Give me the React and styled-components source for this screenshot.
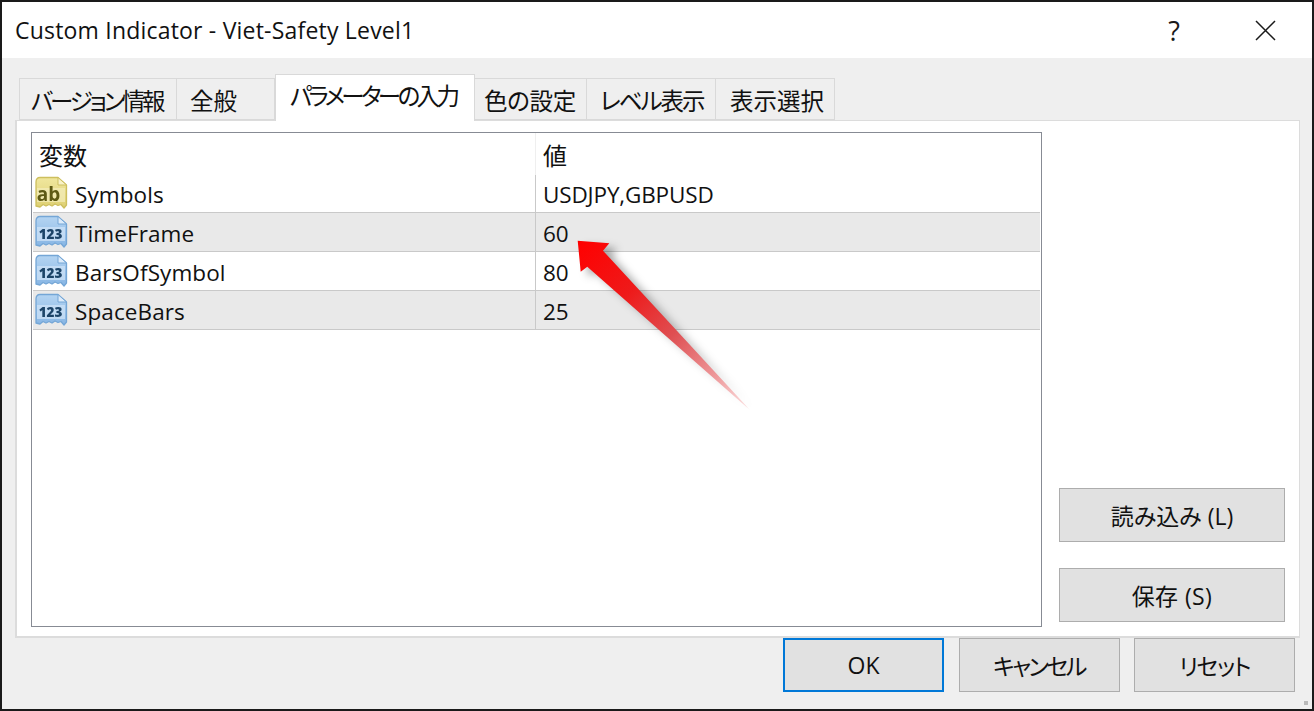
import React from "react";
import styled, { createGlobalStyle } from "styled-components";

const Global = createGlobalStyle`
  html, body { margin: 0; padding: 0; background: #1a1a1a; }
  * { box-sizing: border-box; }
`;

const FONT = `"Open Sans", "Noto Sans CJK JP", sans-serif`;

const Window = styled.div`
  position: relative;
  width: 1314px;
  height: 711px;
  border: 2px solid #1a1a1a;
  background: #efefef;
  display: flex;
  flex-direction: column;
  overflow: hidden;
  font-family: ${FONT};
  font-feature-settings: "palt";
  color: #111;
`;

const TitleBar = styled.header`
  height: 56px;
  flex: none;
  background: #fff;
  display: flex;
  align-items: center;
  padding: 0 36px 0 13px;
`;

const Title = styled.div`
  flex: 1;
  font-size: 23px;
  letter-spacing: 0.2px;
  white-space: nowrap;
`;

const Help = styled.span`
  font-size: 27px;
  line-height: 1;
  margin-right: 75px;
  color: #1a1a1a;
`;

const CloseIcon = styled.svg`
  display: block;
  width: 21px;
  height: 21px;
`;

const Body = styled.main`
  flex: 1;
  display: flex;
  flex-direction: column;
  padding: 16px 12px 17px 13px;
  min-height: 0;
`;

const TabBar = styled.nav`
  display: flex;
  align-items: flex-end;
  height: 46px;
  flex: none;
  padding-left: 4px;
`;

const Tab = styled.div`
  width: ${(p) => p.$w}px;
  height: ${(p) => (p.$active ? 47 : 42)}px;
  margin-bottom: ${(p) => (p.$active ? -1 : 0)}px;
  position: relative;
  z-index: ${(p) => (p.$active ? 2 : 0)};
  background: ${(p) => (p.$active ? "#fff" : "#efefef")};
  border: 1px solid #d9d9d9;
  border-width: 1px 1px ${(p) => (p.$active ? 0 : 1)}px ${(p) => (p.$first || p.$active ? 1 : 0)}px;
  padding-left: ${(p) => p.$pad}px;
  font-size: 23.5px;
  line-height: ${(p) => (p.$active ? 43 : 44)}px;
  letter-spacing: ${(p) => p.$track ?? 0}px;
  white-space: nowrap;
`;

const Panel = styled.section`
  height: 518px;
  flex: none;
  position: relative;
  z-index: 1;
  background: #fff;
  border: 2px solid #dcdcdc;
  border-width: 1px 1px 2px 2px;
  padding: 11px 14px 10px 14px;
  display: flex;
`;

const Grid = styled.div`
  width: 1011px;
  height: 495px;
  flex: none;
  border: 1.5px solid #878b94;
  padding: 0 1px;
`;

const HeaderRow = styled.div`
  display: grid;
  grid-template-columns: 502px 505px;
  height: 42px;
`;

const HeaderCell = styled.div`
  font-size: 24px;
  line-height: 45px;
  padding-left: ${(p) => p.$pad}px;
  border-left: ${(p) => (p.$divided ? "1px solid #efefef" : "0")};
`;

const Row = styled.div`
  display: grid;
  grid-template-columns: 502px 505px;
  height: ${(p) => p.$h}px;
  background: ${(p) => (p.$shade ? "#e9e9e9" : "#fff")};
  border-bottom: 1.5px solid #c9c9c9;
  font-size: 22.5px;
`;

const NameCell = styled.div`
  display: flex;
  align-items: center;
  gap: 7px;
  padding-left: 1px;
  min-width: 0;
`;

const NameText = styled.span`
  padding-top: 3px;
  letter-spacing: 0.1px;
`;

const ValueCell = styled.div`
  display: flex;
  align-items: center;
  padding: 3px 0 0 7px;
  letter-spacing: -0.15px;
  border-left: 1.5px solid #c9c9c9;
`;

const RowIcon = styled.svg`
  display: block;
  width: 34px;
  height: 34px;
  flex: none;
  filter: blur(0.35px);
`;

const Side = styled.aside`
  flex: 1;
  display: flex;
  flex-direction: column;
  justify-content: flex-end;
  align-items: flex-start;
  gap: 26px;
  padding: 0 0 4px 17px;
`;

const Button = styled.button`
  width: ${(p) => p.$w}px;
  height: 54px;
  background: #e1e1e1;
  border: ${(p) => (p.$primary ? "2px solid #0078d7" : "1.5px solid #adadad")};
  font-family: ${FONT};
  font-feature-settings: "palt";
  font-size: 23px;
  letter-spacing: ${(p) => p.$track ?? 0}px;
  color: #111;
  padding: 0;
`;

const Footer = styled.footer`
  display: flex;
  justify-content: flex-end;
  gap: 14.5px;
  margin-right: 5px;
`;

const Grip = styled.span`
  position: absolute;
  right: 4px;
  bottom: 4px;
  width: 4px;
  height: 4px;
  background: #b9b9b9;
`;

const ArrowLayer = styled.svg`
  position: absolute;
  left: -2px;
  top: -2px;
  width: 1314px;
  height: 711px;
  pointer-events: none;
  z-index: 5;
`;

const PageIcon = ({ kind }) => {
  const blue = kind === "num";
  const id = blue ? "pgB" : "pgY";
  const stroke = blue ? "#74a6d6" : "#cdbf5e";
  const top = blue ? "#b4d4f2" : "#f0e79e";
  const bot = blue ? "#86b5e4" : "#ddcf72";
  const ink = blue ? "#1c4468" : "#5e5a14";
  return (
    <RowIcon viewBox="0 0 34 34" aria-hidden="true">
      <defs>
        <linearGradient id={id} x1="0" y1="0" x2="0" y2="1">
          <stop offset="0" stopColor={top} />
          <stop offset="1" stopColor={bot} />
        </linearGradient>
      </defs>
      <path
        d="M6 1.500H24L32.500 9V29L30 32L27 28.500L24 29.500L21 28L18 30L15 28.500L12 30L9 28.500L6 31L2 30V6Q2 1.500 6 1.500Z"
        fill={`url(#${id})`}
        stroke={stroke}
        strokeWidth="1.3"
        strokeLinejoin="round"
      />
      <path d="M24 1.500V9H32.500Z" fill={blue ? "#dcebfa" : "#f8f2c8"} stroke={stroke} strokeWidth="1" />
      <rect x="3" y="12" width="28" height="14" fill={blue ? "#cfe3f7" : "#f3ecb8"} opacity="0.75" />
      {blue ? (
        <text x="16.500" y="24" textAnchor="middle" fontFamily="'Open Sans', sans-serif" fontWeight="800" fontSize="13.500" fill={ink}>123</text>
      ) : (
        <text x="14.500" y="24.500" textAnchor="middle" fontFamily="'Open Sans', sans-serif" fontWeight="700" fontSize="19" fill={ink}>ab</text>
      )}
    </RowIcon>
  );
};

const tabs = [
  { label: "バージョン情報", w: 158, pad: 11, first: true, track: -3.1 },
  { label: "全般", w: 98, pad: 13 },
  { label: "パラメーターの入力", w: 200, pad: 14, active: true, track: -3.6 },
  { label: "色の設定", w: 112, pad: 9, track: -0.3 },
  { label: "レベル表示", w: 129, pad: 13, track: -2 },
  { label: "表示選択", w: 119, pad: 14 },
];

const rows = [
  { name: "Symbols", value: "USDJPY,GBPUSD", kind: "text", h: 37.5 },
  { name: "TimeFrame", value: "60", kind: "num", shade: true, h: 39 },
  { name: "BarsOfSymbol", value: "80", kind: "num", h: 39 },
  { name: "SpaceBars", value: "25", kind: "num", shade: true, h: 39 },
];

export default function App() {
  return (
    <Window>
      <Global />
      <TitleBar>
        <Title>Custom Indicator - Viet-Safety Level1</Title>
        <Help>?</Help>
        <CloseIcon viewBox="0 0 21 21" aria-hidden="true">
          <path d="M1 1L20 20M20 1L1 20" stroke="#1a1a1a" strokeWidth="1.5" fill="none" />
        </CloseIcon>
      </TitleBar>
      <Body>
        <TabBar>
          {tabs.map((t) => (
            <Tab key={t.label} $w={t.w} $pad={t.pad} $active={t.active} $first={t.first} $track={t.track}>
              {t.label}
            </Tab>
          ))}
        </TabBar>
        <Panel>
          <Grid>
            <HeaderRow>
              <HeaderCell $pad={6}>変数</HeaderCell>
              <HeaderCell $pad={7} $divided>値</HeaderCell>
            </HeaderRow>
            {rows.map((r) => (
              <Row key={r.name} $shade={r.shade} $h={r.h}>
                <NameCell>
                  <PageIcon kind={r.kind} />
                  <NameText>{r.name}</NameText>
                </NameCell>
                <ValueCell>{r.value}</ValueCell>
              </Row>
            ))}
          </Grid>
          <Side>
            <Button $w={226}>読み込み (L)</Button>
            <Button $w={226} $track={0.4}>保存 (S)</Button>
          </Side>
        </Panel>
        <Footer>
          <Button $w={161} $primary>OK</Button>
          <Button $w={161} $track={-2.5}>キャンセル</Button>
          <Button $w={161} $track={-1.5}>リセット</Button>
        </Footer>
      </Body>
      <Grip />
      <ArrowLayer viewBox="0 0 1314 711" aria-hidden="true">
        <defs>
          <linearGradient id="arrowFill" gradientUnits="userSpaceOnUse" x1="578" y1="241" x2="751" y2="411">
            <stop offset="0" stopColor="#ff0000" />
            <stop offset="0.3" stopColor="#ee1a1a" />
            <stop offset="0.55" stopColor="#df4f52" />
            <stop offset="0.8" stopColor="#ee9a9c" />
            <stop offset="0.97" stopColor="#fbdcdc" />
            <stop offset="1" stopColor="#ffffff" stopOpacity="0.4" />
          </linearGradient>
          <linearGradient id="arrowShade" gradientUnits="userSpaceOnUse" x1="578" y1="241" x2="751" y2="411">
            <stop offset="0" stopColor="#000" stopOpacity="0.4" />
            <stop offset="0.7" stopColor="#000" stopOpacity="0.2" />
            <stop offset="1" stopColor="#000" stopOpacity="0" />
          </linearGradient>
          <filter id="arrowBlur" x="-20%" y="-20%" width="140%" height="140%">
            <feGaussianBlur stdDeviation="4" />
          </filter>
        </defs>
        <path d="M586 246L617 248.500L611 256L759 416L595 271.500L588.500 277Z" fill="url(#arrowShade)" filter="url(#arrowBlur)" />
        <path d="M577.700 240.700L609.300 243.300L603 250.700L750.700 410.700L587.300 266.700L580.700 271.700Z" fill="url(#arrowFill)" />
      </ArrowLayer>
    </Window>
  );
}
